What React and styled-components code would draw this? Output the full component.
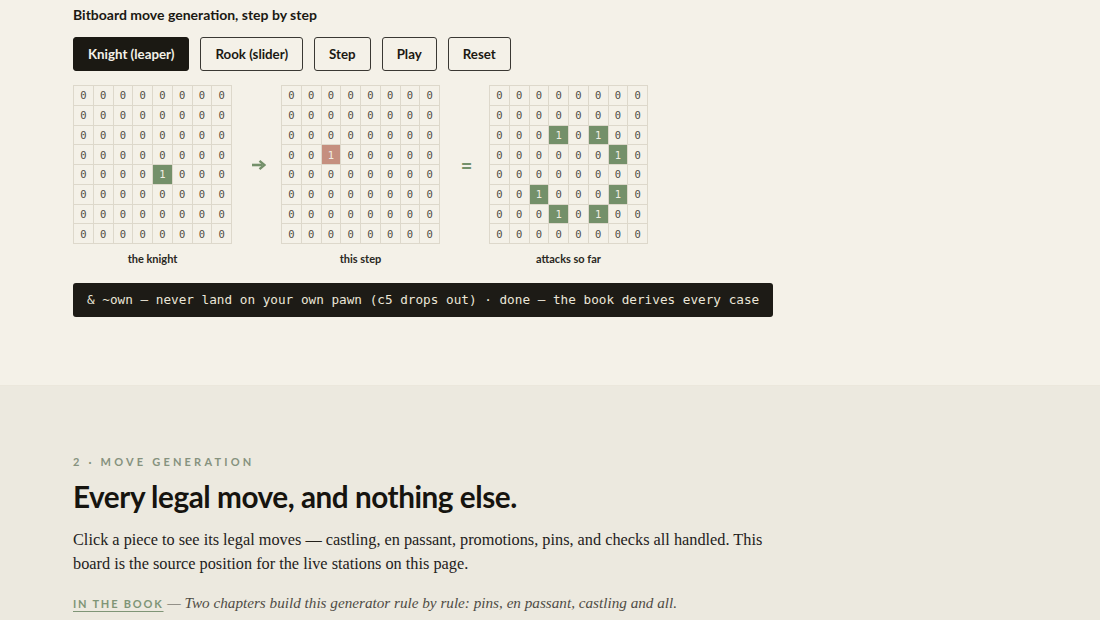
import React, { useState } from 'react';
import styled, { createGlobalStyle } from 'styled-components';

const GlobalStyle = createGlobalStyle`
  html, body {
    margin: 0;
    padding: 0;
    background: #ece9df;
  }
  body {
    font-family: Lato, "Liberation Sans", sans-serif;
    color: #1b1913;
  }
`;

const Demo = styled.section`
  background: #f4f1e8;
  padding: 6px 73px 68px;
  border-bottom: 1px solid #ebe7dc;
`;

const DemoTitle = styled.h3`
  margin: 0 0 14px;
  font-size: 14px;
  font-weight: 700;
  line-height: 17px;
`;

const Toolbar = styled.div`
  display: flex;
  gap: 11px;
  margin-bottom: 14px;
`;

const Button = styled.button`
  height: 34px;
  padding: 0 14px;
  border-radius: 3px;
  border: 1px solid ${p => (p.$active ? '#1b1913' : '#3a3833')};
  background: ${p => (p.$active ? '#1b1913' : 'transparent')};
  color: ${p => (p.$active ? '#f4f1e8' : '#1b1913')};
  font-family: Lato, "Liberation Sans", sans-serif;
  font-weight: 700;
  font-size: 13.3px;
  cursor: pointer;
`;

const Boards = styled.div`
  display: flex;
  align-items: flex-start;
`;

const BoardCol = styled.div`
  display: flex;
  flex-direction: column;
  align-items: center;
`;

const Grid = styled.div`
  display: grid;
  grid-template-columns: repeat(8, 19.75px);
  grid-auto-rows: 19.75px;
  border-top: 1px solid #ddd8cb;
  border-left: 1px solid #ddd8cb;
`;

const Cell = styled.div`
  display: flex;
  align-items: center;
  justify-content: center;
  border-right: 1px solid #ddd8cb;
  border-bottom: 1px solid #ddd8cb;
  font-family: "DejaVu Sans Mono", monospace;
  font-size: 10.5px;
  color: ${p => (p.$tone ? '#f1eee4' : '#4f4c44')};
  background: ${p =>
    p.$tone === 'on' ? '#74906a' : p.$tone === 'step' ? '#c58f7f' : 'transparent'};
`;

const BoardLabel = styled.div`
  margin-top: 8px;
  font-size: 11px;
  font-weight: 700;
  color: #2a2822;
`;

const Operator = styled.div`
  width: 49px;
  height: 160px;
  display: flex;
  align-items: center;
  justify-content: center;
  padding-left: 4px;
  box-sizing: border-box;
  color: #74906a;
  font-size: 20px;
  font-weight: 700;
`;

const CodeBar = styled.div`
  width: 700px;
  box-sizing: border-box;
  margin-top: 18px;
  height: 34px;
  display: flex;
  align-items: center;
  padding: 0 14px;
  background: #1d1b16;
  border-radius: 3px;
  color: #ebe6d8;
  font-family: "DejaVu Sans Mono", monospace;
  font-size: 12.7px;
  line-height: 16px;
  padding-bottom: 1px;
  white-space: pre;
`;

const Chapter = styled.section`
  padding: 69px 73px 0;
  background: #ece9df;
`;

const Eyebrow = styled.div`
  font-size: 11px;
  font-weight: 700;
  letter-spacing: 3.2px;
  color: #86927e;
  margin-bottom: 9px;
`;

const Heading = styled.h2`
  margin: 0 0 11px;
  font-size: 29.7px;
  font-weight: 700;
  letter-spacing: -0.45px;
  line-height: 40px;
  color: #16140f;
`;

const Lede = styled.p`
  margin: 0 0 19px;
  max-width: 700px;
  font-family: "Liberation Serif", serif;
  font-size: 16.3px;
  line-height: 24px;
  color: #23211b;
`;

const Aside = styled.p`
  margin: 0;
  font-family: "Liberation Serif", serif;
  font-style: italic;
  font-size: 15.2px;
  line-height: 16px;
  color: #4f4c45;
`;

const BookLink = styled.a`
  font-family: Lato, "Liberation Sans", sans-serif;
  font-style: normal;
  font-size: 11px;
  font-weight: 700;
  letter-spacing: 1.8px;
  color: #7f9577;
  text-decoration: underline;
  text-underline-offset: 3px;
`;

const sq = (r, c) => r * 8 + c;

const knight = new Set([sq(4, 4)]);
const step = new Set([sq(3, 2)]);
const attacks = new Set([
  sq(2, 3), sq(2, 5), sq(3, 6), sq(5, 2), sq(5, 6), sq(6, 3), sq(6, 5),
]);

function Board({ bits, tone, label }) {
  return (
    <BoardCol>
      <Grid>
        {Array.from({ length: 64 }, (_, i) => {
          const on = bits.has(i);
          return (
            <Cell key={i} $tone={on ? tone : null}>
              {on ? '1' : '0'}
            </Cell>
          );
        })}
      </Grid>
      <BoardLabel>{label}</BoardLabel>
    </BoardCol>
  );
}

const Arrow = () => (
  <svg width="15" height="12" viewBox="0 0 15 12">
    <path d="M1 6h10.5" stroke="#74906a" strokeWidth="2.6" />
    <path d="M8.5 1.8L13.5 6 8.5 10.2" fill="none" stroke="#74906a" strokeWidth="2.4" />
  </svg>
);

export default function App() {
  const [piece, setPiece] = useState('knight');

  return (
    <>
      <GlobalStyle />
      <Demo>
        <DemoTitle>Bitboard move generation, step by step</DemoTitle>
        <Toolbar>
          <Button $active={piece === 'knight'} onClick={() => setPiece('knight')}>Knight (leaper)</Button>
          <Button $active={piece === 'rook'} onClick={() => setPiece('rook')}>Rook (slider)</Button>
          <Button>Step</Button>
          <Button>Play</Button>
          <Button>Reset</Button>
        </Toolbar>
        <Boards>
          <Board bits={knight} tone="on" label="the knight" />
          <Operator><Arrow /></Operator>
          <Board bits={step} tone="step" label="this step" />
          <Operator>=</Operator>
          <Board bits={attacks} tone="on" label="attacks so far" />
        </Boards>
        <CodeBar>&amp; ~own — never land on your own pawn (c5 drops out) · done — the book derives every case</CodeBar>
      </Demo>
      <Chapter>
        <Eyebrow>2 · MOVE GENERATION</Eyebrow>
        <Heading>Every legal move, and nothing else.</Heading>
        <Lede>
          Click a piece to see its legal moves — castling, en passant, promotions, pins, and checks all
          handled. This board is the source position for the live stations on this page.
        </Lede>
        <Aside>
          <BookLink href="#">IN THE BOOK</BookLink> — Two chapters build this generator rule by rule: pins, en passant, castling and all.
        </Aside>
      </Chapter>
    </>
  );
}
